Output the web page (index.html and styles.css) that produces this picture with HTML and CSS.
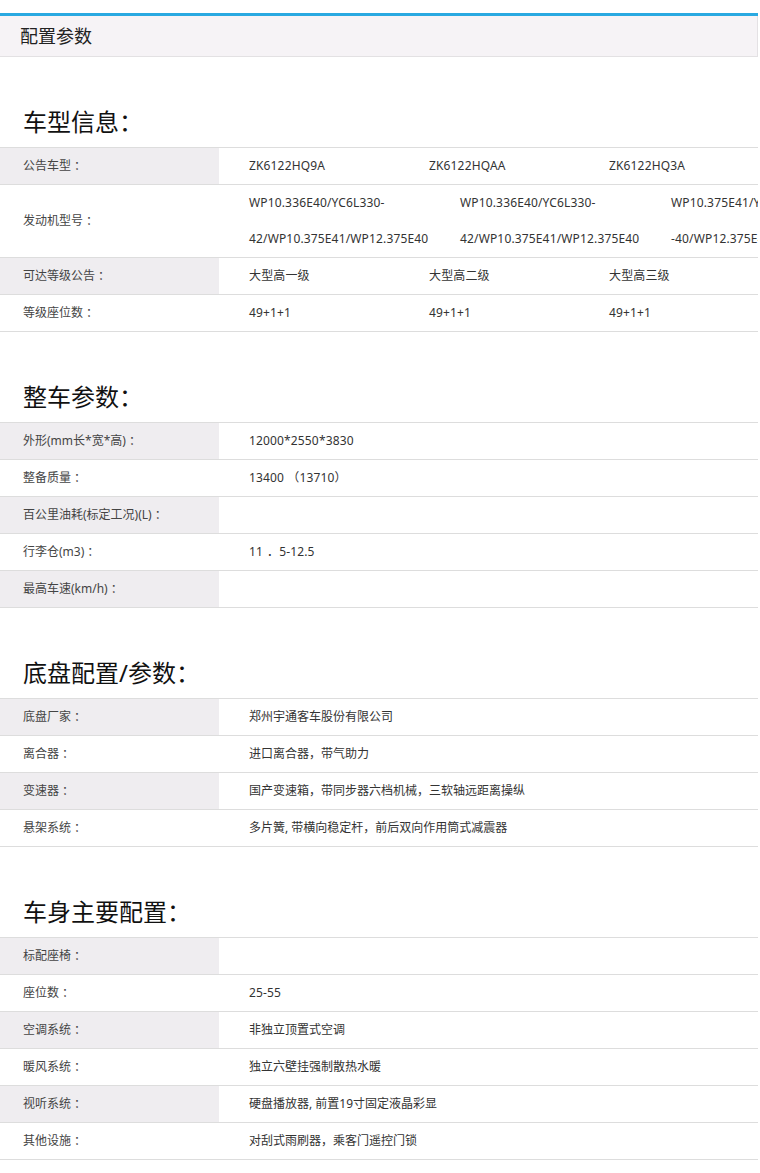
FILE: index.html
```html
<!DOCTYPE html>
<html lang="zh-CN">
<head>
<meta charset="utf-8">
<title>配置参数</title>
<link rel="stylesheet" href="styles.css">
</head>
<body>
<div class="page">
  <div class="header">配置参数</div>

  <div class="section">
    <h2 class="sec-title">车型信息<span class="p">：</span></h2>
    <div class="spec">
      <div class="row odd">
        <div class="label">公告车型<span class="p">：</span></div>
        <div class="vals">
          <div class="val">ZK6122HQ9A</div>
          <div class="val">ZK6122HQAA</div>
          <div class="val">ZK6122HQ3A</div>
        </div>
      </div>
      <div class="row">
        <div class="label">发动机型号<span class="p">：</span></div>
        <div class="vals">
          <div class="val wide">WP10.336E40/YC6L330-<br>42/WP10.375E41/WP12.375E40</div>
          <div class="val wide">WP10.336E40/YC6L330-<br>42/WP10.375E41/WP12.375E40</div>
          <div class="val wide">WP10.375E41/YC6L330<br>-40/WP12.375E40</div>
        </div>
      </div>
      <div class="row odd">
        <div class="label">可达等级公告<span class="p">：</span></div>
        <div class="vals">
          <div class="val">大型高一级</div>
          <div class="val">大型高二级</div>
          <div class="val">大型高三级</div>
        </div>
      </div>
      <div class="row">
        <div class="label">等级座位数<span class="p">：</span></div>
        <div class="vals">
          <div class="val">49+1+1</div>
          <div class="val">49+1+1</div>
          <div class="val">49+1+1</div>
        </div>
      </div>
    </div>
  </div>

  <div class="section">
    <h2 class="sec-title">整车参数<span class="p">：</span></h2>
    <div class="spec">
      <div class="row odd"><div class="label">外形(mm长*宽*高)<span class="p">：</span></div><div class="vals"><div class="val">12000*2550*3830</div></div></div>
      <div class="row"><div class="label">整备质量<span class="p">：</span></div><div class="vals"><div class="val">13400 <span class="p">（</span>13710<span class="p">）</span></div></div></div>
      <div class="row odd"><div class="label">百公里油耗(标定工况)(L)<span class="p">：</span></div><div class="vals"><div class="val"></div></div></div>
      <div class="row"><div class="label">行李仓(m3)<span class="p">：</span></div><div class="vals"><div class="val">11<span class="dot">．</span>5-12.5</div></div></div>
      <div class="row odd"><div class="label">最高车速(km/h)<span class="p">：</span></div><div class="vals"><div class="val"></div></div></div>
    </div>
  </div>

  <div class="section">
    <h2 class="sec-title">底盘配置/参数<span class="p">：</span></h2>
    <div class="spec">
      <div class="row odd"><div class="label">底盘厂家<span class="p">：</span></div><div class="vals"><div class="val long">郑州宇通客车股份有限公司</div></div></div>
      <div class="row"><div class="label">离合器<span class="p">：</span></div><div class="vals"><div class="val long">进口离合器，带气助力</div></div></div>
      <div class="row odd"><div class="label">变速器<span class="p">：</span></div><div class="vals"><div class="val long">国产变速箱，带同步器六档机械，三软轴远距离操纵</div></div></div>
      <div class="row"><div class="label">悬架系统<span class="p">：</span></div><div class="vals"><div class="val long">多片簧, 带横向稳定杆，前后双向作用筒式减震器</div></div></div>
    </div>
  </div>

  <div class="section">
    <h2 class="sec-title">车身主要配置<span class="p">：</span></h2>
    <div class="spec">
      <div class="row odd"><div class="label">标配座椅<span class="p">：</span></div><div class="vals"><div class="val"></div></div></div>
      <div class="row"><div class="label">座位数<span class="p">：</span></div><div class="vals"><div class="val">25-55</div></div></div>
      <div class="row odd"><div class="label">空调系统<span class="p">：</span></div><div class="vals"><div class="val long">非独立顶置式空调</div></div></div>
      <div class="row"><div class="label">暖风系统<span class="p">：</span></div><div class="vals"><div class="val long">独立六壁挂强制散热水暖</div></div></div>
      <div class="row odd"><div class="label">视听系统<span class="p">：</span></div><div class="vals"><div class="val long">硬盘播放器, 前置19寸固定液晶彩显</div></div></div>
      <div class="row"><div class="label">其他设施<span class="p">：</span></div><div class="vals"><div class="val long">对刮式雨刷器，乘客门遥控门锁</div></div></div>
    </div>
  </div>
</div>
</body>
</html>
```

FILE: styles.css
```css
html, body {
  margin: 0;
  padding: 0;
  background: #ffffff;
}

body {
  font-family: "Noto Sans", "Noto Sans CJK SC", sans-serif;
  color: #333333;
}

.page {
  width: 758px;
  margin-top: 13px;
  overflow: hidden;
  border-top: 3px solid #29a9e1;
}

.header {
  height: 40px;
  line-height: 40px;
  padding-left: 20px;
  font-size: 18px;
  color: #222222;
  background: #f6f3f6;
  border-right: 1px solid #e4e1e4;
  border-bottom: 1px solid #e3e1e3;
}

.p {
  font-family: "Noto Sans CJK TC", "Noto Sans CJK SC", sans-serif;
  line-height: 1;
}

.dot {
  padding-left: 4px;
}

.sec-title {
  margin: 40px 0 0 0;
  height: 50px;
  line-height: 50px;
  padding-left: 23px;
  font-size: 24px;
  font-weight: normal;
  color: #111111;
  overflow: hidden;
}

.spec {
  border-top: 1px solid #dddddd;
}

.row {
  display: flex;
  border-bottom: 1px solid #dddddd;
  font-size: 12px;
}

.label {
  flex: 0 0 219px;
  box-sizing: border-box;
  padding-left: 23px;
  display: flex;
  align-items: center;
  min-height: 36px;
  line-height: 16px;
  color: #444444;
  white-space: nowrap;
}

.row.odd .label {
  background: #efedf0;
}

.vals {
  display: flex;
  padding-left: 30px;
  line-height: 36px;
}

.val {
  flex: 0 0 180px;
  white-space: nowrap;
  color: #333333;
  letter-spacing: 0.15px;
}

.val.wide {
  flex-basis: 211px;
}

.val.long {
  flex-basis: 480px;
  letter-spacing: 0;
}
```
